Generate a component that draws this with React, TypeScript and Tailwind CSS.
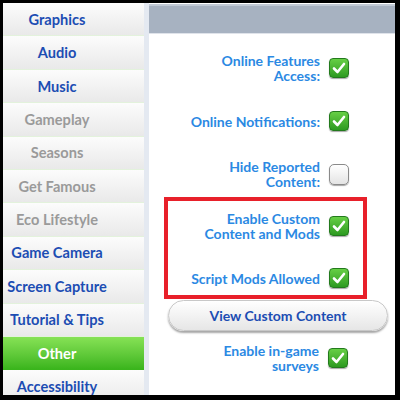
import React from "react";

const items: { label: string; kind: "blue" | "grey" | "active" }[] = [
  { label: "Graphics", kind: "blue" },
  { label: "Audio", kind: "blue" },
  { label: "Music", kind: "blue" },
  { label: "Gameplay", kind: "grey" },
  { label: "Seasons", kind: "grey" },
  { label: "Get Famous", kind: "grey" },
  { label: "Eco Lifestyle", kind: "grey" },
  { label: "Game Camera", kind: "blue" },
  { label: "Screen Capture", kind: "blue" },
  { label: "Tutorial & Tips", kind: "blue" },
  { label: "Other", kind: "active" },
  { label: "Accessibility", kind: "blue" },
];

function Check({ on }: { on: boolean }) {
  if (!on) {
    return (
      <div className="w-[20px] h-[21px] shrink-0 rounded-[5px] border border-[#8a8a8a] bg-gradient-to-b from-white to-[#e4e4e4] shadow-[0_1px_1px_rgba(0,0,0,0.35)]" />
    );
  }
  return (
    <div className="w-[20px] h-[20px] shrink-0 rounded-[4px] border border-[#237a1d] bg-gradient-to-b from-[#66cf45] to-[#2c9a20] shadow-[0_1px_1px_rgba(0,0,0,0.35)] flex items-center justify-center">
      <svg width="14" height="12" viewBox="0 0 14 12">
        <path d="M2 6.5 L5.5 10 L12 2" fill="none" stroke="white" strokeWidth="2.6" strokeLinecap="round" strokeLinejoin="round" />
      </svg>
    </div>
  );
}

function Row({ lines, on, h, extra }: { lines: string[]; on: boolean; h: string; extra?: string }) {
  return (
    <div className={`flex items-center justify-end gap-[9px] ${h} ${extra ?? ""}`}>
      <div className="text-right text-[14px] leading-[15px] font-bold text-[#2b89e3]">
        {lines.map((l) => (
          <div key={l}>{l}</div>
        ))}
      </div>
      <Check on={on} />
    </div>
  );
}

export default function App() {
  return (
    <div
      className="w-[400px] h-[400px] bg-black pt-[3px] pl-[3px] pr-[5px] pb-[5px] flex overflow-hidden"
      style={{ fontFamily: "Lato, 'Open Sans', sans-serif" }}
    >
      <div className="w-[141px] flex flex-col overflow-hidden">
        {items.map((it) => (
          <div
            key={it.label}
            className={`h-[33.4px] shrink-0 flex items-center justify-center pr-[33px] pt-[1px] text-[14.6px] font-bold border-b ${
              it.kind === "active"
                ? "bg-gradient-to-b from-[#86e255] to-[#3ab51c] text-white border-[#3ab51c]"
                : "bg-gradient-to-b from-[#fcfcfc] to-[#e9e9e9] border-[#e3f2dc] " +
                  (it.kind === "blue" ? "text-[#1c4db3]" : "text-[#9a9a9a]")
            }`}
          >
            {it.label}
          </div>
        ))}
      </div>
      <div className="w-[5px] bg-[#e4e9f1]" />
      <div className="flex-1 bg-white flex flex-col">
        <div className="h-[30px] mt-[1px] bg-[#a7b2c1] border-t-[2px] border-[#c3cbd6] border-b border-b-[#dfe3ea]" />
        <div className="pr-[46px] mt-[12px]">
          <Row lines={["Online Features", "Access:"]} on h="h-[44px]" />
          <Row lines={["Online Notifications:"]} on h="h-[44px]" extra="mt-[9px]" />
          <Row lines={["Hide Reported", "Content:"]} on={false} h="h-[44px]" extra="mt-[9px]" />
        </div>
        <div className="ml-[15px] mr-[28px] mt-[1px] h-[102px] border-[4px] border-[#e8202a] pr-[14px] pt-[6px]">
          <Row lines={["Enable Custom", "Content and Mods"]} on h="h-[38px]" />
          <Row lines={["Script Mods Allowed"]} on h="h-[38px]" extra="mt-[14px]" />
        </div>
        <div className="ml-[19px] mr-[7px] mt-[1px] h-[31px] rounded-full bg-gradient-to-b from-white to-[#e6e6e6] border border-[#c8c8c8] shadow-[0_2px_2px_rgba(0,0,0,0.35)] flex items-center justify-center text-[14px] font-bold text-[#1c4db3]">
          View Custom Content
        </div>
        <div className="pr-[47px] mt-[9px]">
          <Row lines={["Enable in-game", "surveys"]} on h="h-[36px]" />
        </div>
      </div>
    </div>
  );
}
